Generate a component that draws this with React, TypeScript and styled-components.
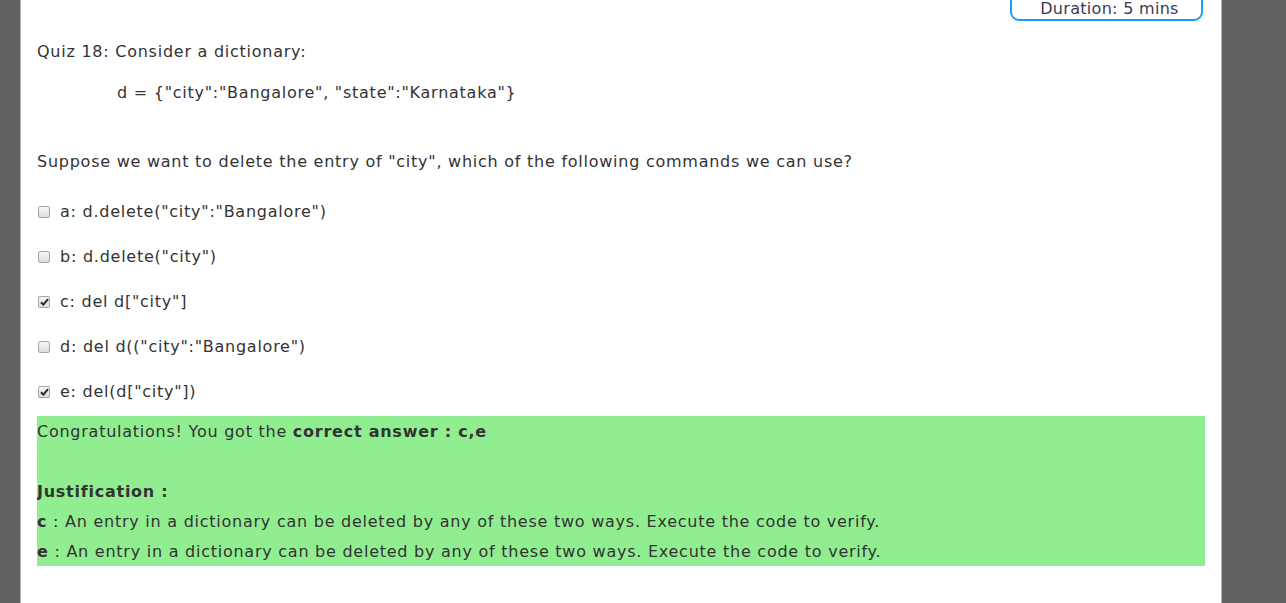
import React from "react";
import styled, { createGlobalStyle } from "styled-components";

const GlobalStyle = createGlobalStyle`
  html, body {
    margin: 0;
    padding: 0;
    background: #616161;
    overflow: hidden;
  }
  body {
    font-family: "DejaVu Sans", Verdana, sans-serif;
    font-size: 16px;
    letter-spacing: 0.75px;
    color: #333;
  }
`;

const options = [
  { key: "a", text: 'd.delete("city":"Bangalore")', checked: false },
  { key: "b", text: 'd.delete("city")', checked: false },
  { key: "c", text: 'del d["city"]', checked: true },
  { key: "d", text: 'del d(("city":"Bangalore")', checked: false },
  { key: "e", text: 'del(d["city"])', checked: true },
];

const justifications = [
  { key: "c", text: "An entry in a dictionary can be deleted by any of these two ways. Execute the code to verify." },
  { key: "e", text: "An entry in a dictionary can be deleted by any of these two ways. Execute the code to verify." },
];

const Page = styled.div`
  margin-left: 20px;
  width: 1202px;
  height: 603px;
  background: #fff;
  border-left: 1px solid #b5b5b5;
  border-right: 1px solid #b5b5b5;
  padding: 0 16px;
  box-sizing: border-box;
  line-height: 30px;
`;

const TopBar = styled.div`
  display: flex;
  justify-content: flex-end;
  padding-right: 2px;
  height: 23px;
`;

const Duration = styled.div`
  width: 193px;
  height: 32px;
  margin-top: -11px;
  box-sizing: border-box;
  border: 2px solid #1a9bfc;
  border-radius: 9px;
  text-align: center;
  line-height: 36px;
  letter-spacing: 0.3px;
  padding-left: 6px;
  color: #3b3b55;
`;

const Question = styled.div<{ $top: number; $indent?: number }>`
  margin-top: ${(p) => p.$top}px;
  padding-left: ${(p) => p.$indent || 0}px;
  white-space: pre;
`;

const OptionList = styled.div`
  display: flex;
  flex-direction: column;
  gap: 15px;
  margin-top: 20px;
`;

const OptionRow = styled.label`
  display: flex;
  align-items: center;
  gap: 10px;
  padding-left: 1px;
`;

const Box = styled.span`
  width: 12px;
  height: 12px;
  box-sizing: border-box;
  border: 1px solid #a6a6a6;
  border-radius: 2px;
  background: linear-gradient(#f6f6f6, #dedede);
  display: flex;
  align-items: center;
  justify-content: center;
`;

const Result = styled.div`
  margin-top: 9px;
  padding-top: 1px;
  height: 150px;
  box-sizing: border-box;
  overflow: hidden;
  background: #90ee90;
  line-height: 30px;
`;

const Line = styled.div`
  min-height: 30px;
`;

const Check = ({ checked }: { checked: boolean }) => (
  <Box>
    {checked && (
      <svg width="9" height="8" viewBox="0 0 9 8">
        <path d="M1 4.2 L3.4 6.6 L8 1.2" fill="none" stroke="#2b2b2b" strokeWidth="2" />
      </svg>
    )}
  </Box>
);

export default function App() {
  return (
    <>
      <GlobalStyle />
      <Page>
        <TopBar>
          <Duration>Duration: 5 mins</Duration>
        </TopBar>
        <Question $top={14}>Quiz 18: Consider a dictionary:</Question>
        <Question $top={11} $indent={80}>
          d = {'{"city":"Bangalore", "state":"Karnataka"}'}
        </Question>
        <Question $top={39}>
          Suppose we want to delete the entry of "city", which of the following commands we can use?
        </Question>
        <OptionList>
          {options.map((o) => (
            <OptionRow key={o.key}>
              <Check checked={o.checked} />
              <span>
                {o.key}: {o.text}
              </span>
            </OptionRow>
          ))}
        </OptionList>
        <Result>
          <Line>
            Congratulations! You got the <b>correct answer : c,e</b>
          </Line>
          <Line />
          <Line>
            <b>Justification :</b>
          </Line>
          {justifications.map((j) => (
            <Line key={j.key}>
              <b>{j.key}</b> : {j.text}
            </Line>
          ))}
        </Result>
      </Page>
    </>
  );
}
